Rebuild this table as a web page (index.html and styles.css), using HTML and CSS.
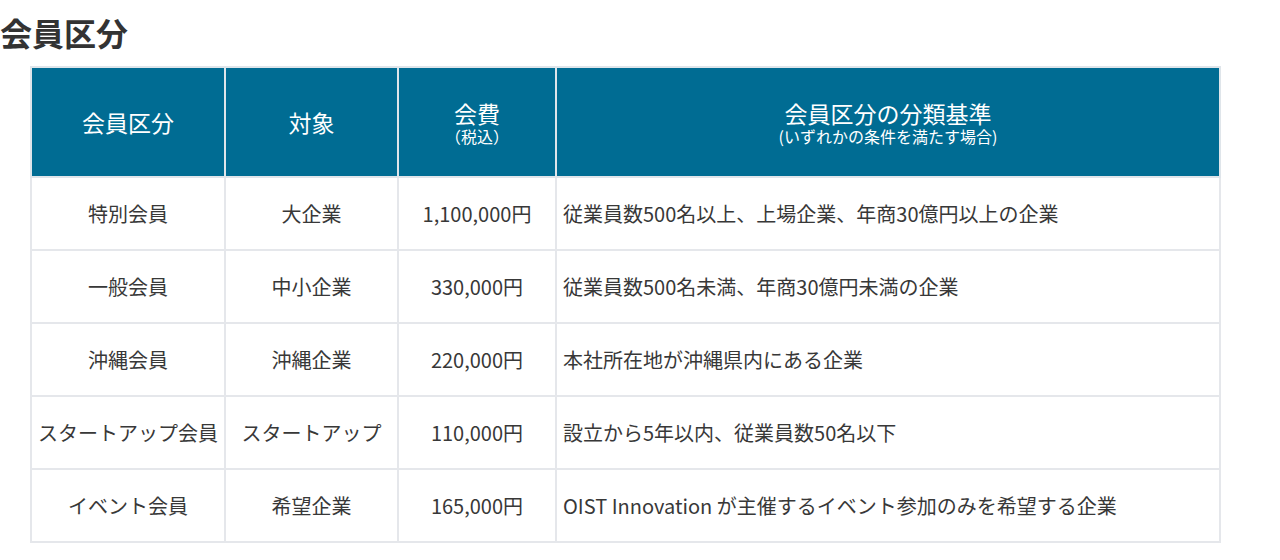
FILE: index.html
```html
<!DOCTYPE html>
<html lang="ja">
<head>
<meta charset="utf-8">
<link rel="stylesheet" href="styles.css">
</head>
<body>
<section class="membership">
  <h2 class="title">会員区分</h2>
  <table class="plans">
    <colgroup>
      <col class="c1"><col class="c2"><col class="c3"><col class="c4">
    </colgroup>
    <thead>
      <tr>
        <th>会員区分</th>
        <th>対象</th>
        <th>会費<span class="sub">（税込）</span></th>
        <th>会員区分の分類基準<span class="sub">(いずれかの条件を満たす場合)</span></th>
      </tr>
    </thead>
    <tbody>
      <tr><td>特別会員</td><td>大企業</td><td>1,100,000円</td><td class="left">従業員数500名以上、上場企業、年商30億円以上の企業</td></tr>
      <tr><td>一般会員</td><td>中小企業</td><td>330,000円</td><td class="left">従業員数500名未満、年商30億円未満の企業</td></tr>
      <tr><td>沖縄会員</td><td>沖縄企業</td><td>220,000円</td><td class="left">本社所在地が沖縄県内にある企業</td></tr>
      <tr><td>スタートアップ会員</td><td>スタートアップ</td><td>110,000円</td><td class="left">設立から5年以内、従業員数50名以下</td></tr>
      <tr><td>イベント会員</td><td>希望企業</td><td>165,000円</td><td class="left">OIST Innovation が主催するイベント参加のみを希望する企業</td></tr>
    </tbody>
  </table>
</section>
</body>
</html>
```

FILE: styles.css
```css
html, body {
  margin: 0;
  padding: 0;
  background: #ffffff;
}
body {
  font-family: "Noto Sans CJK JP", "Noto Sans", sans-serif;
  color: #333333;
}
.membership {
  padding-top: 10px;
}
.title {
  margin: 0 0 12px 0;
  font-size: 32px;
  line-height: 44px;
  font-weight: 700;
  color: #333333;
}
.plans {
  margin-left: 30px;
  width: 1191px;
  border-collapse: collapse;
  table-layout: fixed;
}
.c1 { width: 194px; }
.c2 { width: 173px; }
.c3 { width: 158px; }
.c4 { width: auto; }
.plans th,
.plans td {
  border: 2px solid #e5e7eb;
  text-align: center;
  vertical-align: middle;
  padding: 0 4px;
  white-space: nowrap;
}
.plans th {
  background: #006c93;
  color: #ffffff;
  font-weight: 400;
  font-size: 23px;
  line-height: 28px;
  height: 108px;
  border-color: #dfe5ea;
}
.plans th .sub {
  display: block;
  font-size: 16px;
  line-height: 18px;
}
.plans td {
  font-size: 20px;
  line-height: 28px;
  height: 71px;
  color: #383838;
}
.plans td.left {
  text-align: left;
  padding-left: 6px;
}
```
